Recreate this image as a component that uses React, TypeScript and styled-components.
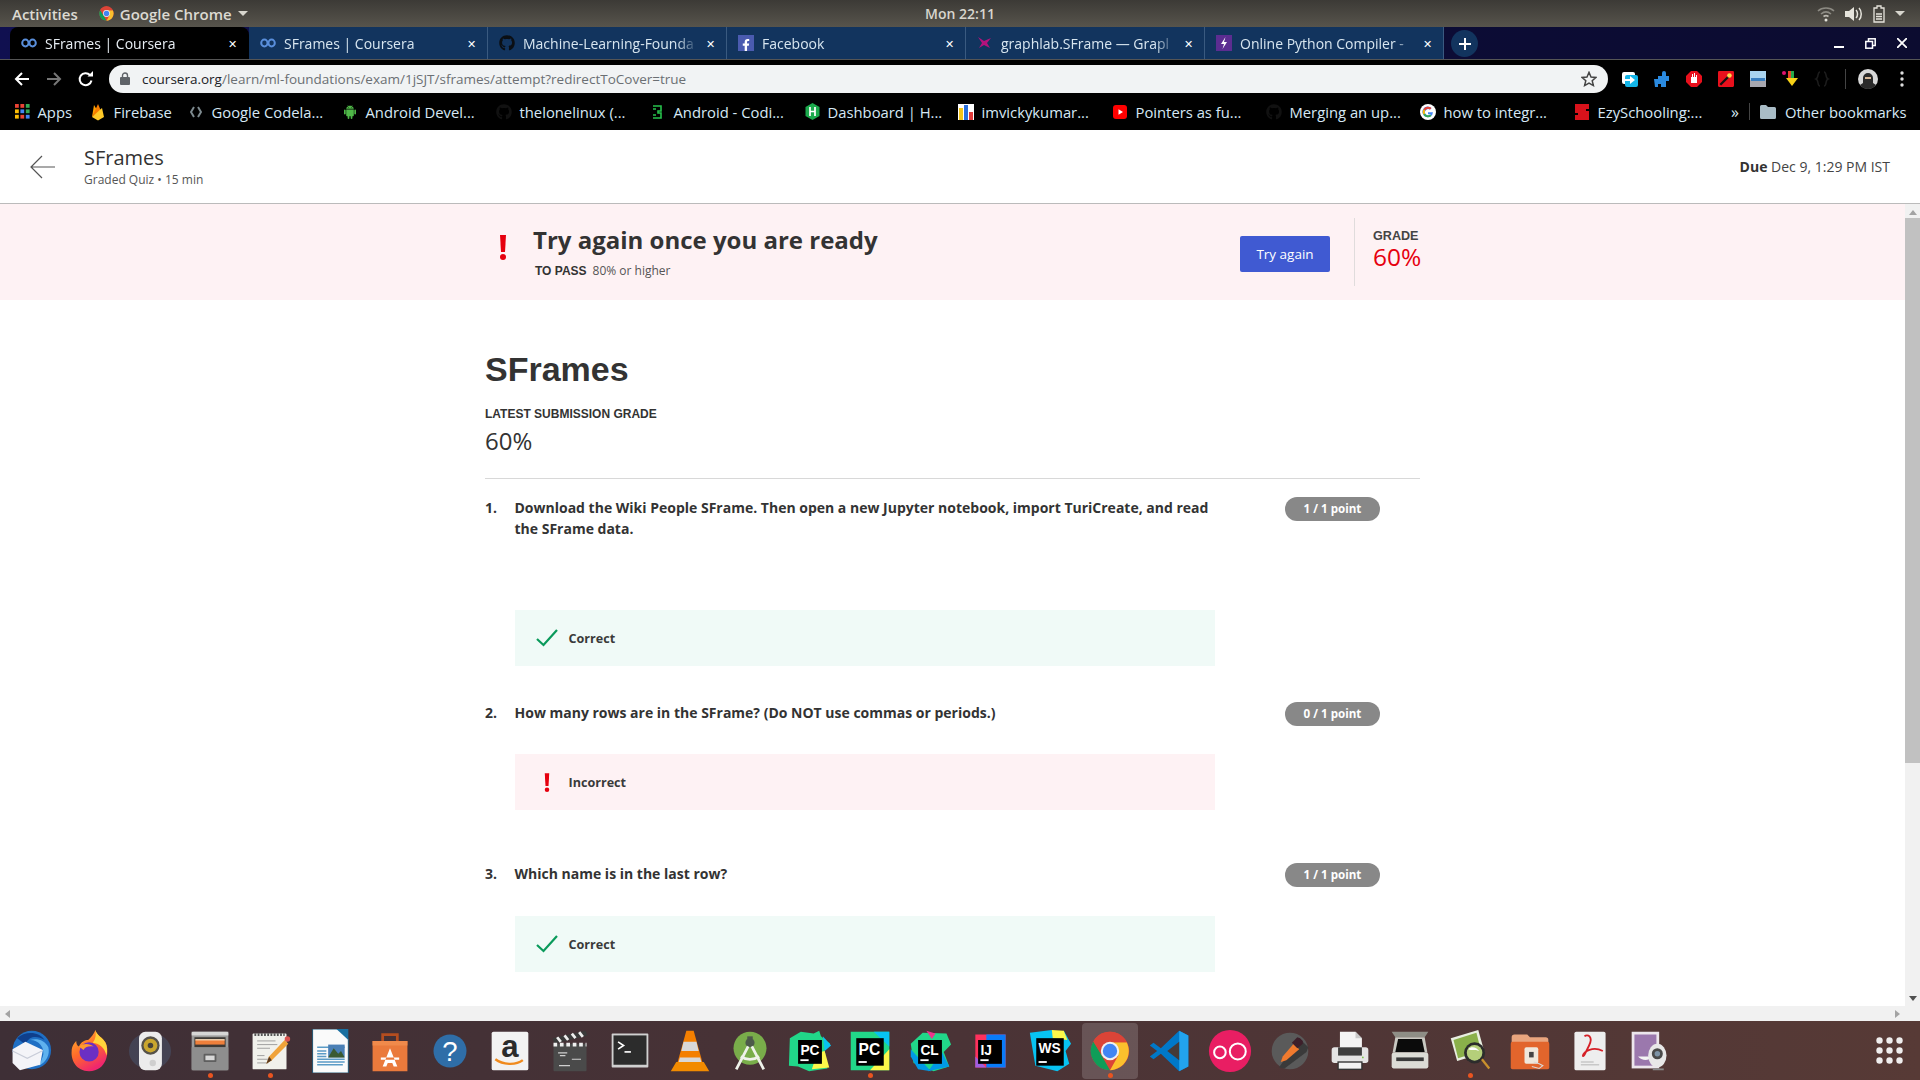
import React from 'react';
import styled, { createGlobalStyle } from 'styled-components';
import { FaGithub, FaFacebookF } from 'react-icons/fa';
import { AiFillAndroid } from 'react-icons/ai';

const GlobalStyle = createGlobalStyle`
    html, body { margin: 0; padding: 0; background: #000; overflow: hidden; }
    * { box-sizing: border-box; }
    body { font-family: "Open Sans", "Noto Sans", sans-serif; color: #333; }
`;

const ChromeLogo = ({ size }: { size: number }) => (
    <svg width={size} height={size} viewBox="0 0 48 48">
        <circle cx="24" cy="24" r="23" fill="#db4437" />
        <path d="M24 47A23 23 0 0 1 4 12.5L14 29.5 24 47z" fill="#0f9d58" />
        <path d="M24 47L34 29.5 24 13.5H44A23 23 0 0 1 24 47z" fill="#fbc02d" />
        <path d="M4 12.5L14.5 29 24 13.5H44L42 10A23 23 0 0 0 6 9z" fill="#db4437" />
        <circle cx="24" cy="24" r="11" fill="#f1f1f1" />
        <circle cx="24" cy="24" r="8.6" fill="#4285f4" />
    </svg>
);

const BangIcon = ({ w, h }: { w: number; h: number }) => (
    <svg width={w} height={h} viewBox="0 0 8 25" fill="#e6000e">
        <path d="M1 0h6l-1 17H2z" />
        <circle cx="4" cy="22" r="3" />
    </svg>
);

const Infinity8 = () => (
    <svg width="16" height="10" viewBox="0 0 16 10" fill="none" stroke="#5a8fdc" strokeWidth="2">
        <ellipse cx="4.4" cy="5" rx="3.2" ry="3.4" />
        <ellipse cx="11.6" cy="5" rx="3.2" ry="3.4" />
    </svg>
);

const GraphlabIcon = () => (
    <svg width="16" height="14" viewBox="0 0 16 14">
        <path d="M1 1l6 4 7-3-4 5 3 5-6-3-5 3 3-5z" fill="#b5127c" />
    </svg>
);

const BoltIcon = () => (
    <svg width="16" height="16" viewBox="0 0 16 16">
        <rect width="16" height="16" fill="#5c2d91" />
        <path d="M9.5 2L5 9h3l-1.5 5L11 7H8z" fill="#fff" />
    </svg>
);

const FacebookIcon = () => (
    <FbBox>
        <FaFacebookF size={12} />
    </FbBox>
);

const FbBox = styled.span`
    width: 16px;
    height: 16px;
    background: #4a5bb0;
    color: #fff;
    display: flex;
    align-items: flex-end;
    justify-content: center;
`;

const AppsIcon = () => (
    <svg width="15" height="15" viewBox="0 0 15 15">
        {['#ea4335', '#ea4335', '#34a853', '#fbbc05', '#4285f4', '#34a853', '#fbbc05', '#ea4335', '#4285f4'].map((c, i) => (
            <rect key={i} x={(i % 3) * 5.4} y={Math.floor(i / 3) * 5.4} width="3.8" height="3.8" fill={c} />
        ))}
    </svg>
);

const FirebaseIcon = () => (
    <svg width="14" height="18" viewBox="0 0 14 18">
        <path d="M1 14L3 2l3 5z" fill="#ffa000" />
        <path d="M1 14L7 1l3 7z" fill="#f57c00" />
        <path d="M1 14L11 5l2 9-6 3.5z" fill="#ffca28" />
    </svg>
);

const CodelabIcon = () => (
    <svg width="12" height="14" viewBox="0 0 12 14" fill="none" stroke="#7d8a8f" strokeWidth="2">
        <path d="M4 2L1 7l3 5M8 2l3 5-3 5" />
    </svg>
);

const AndroidCodi = () => (
    <svg width="12" height="16" viewBox="0 0 12 16" fill="none" stroke="#27c24c" strokeWidth="1.6">
        <path d="M1 2h8v5H6v2h3v5H1M4 5H1M4 11H1" />
    </svg>
);

const HackerIcon = () => (
    <svg width="15" height="17" viewBox="0 0 15 17">
        <path d="M7.5 0l7 4v9l-7 4-7-4V4z" fill="#1ba94c" />
        <path d="M5 4v9M10 4v9M5 8.5h5" stroke="#fff" strokeWidth="1.7" />
    </svg>
);

const BarsIcon = () => (
    <svg width="16" height="16" viewBox="0 0 16 16">
        <rect width="16" height="16" fill="#fff" />
        <rect x="1" y="4" width="4" height="12" fill="#f5c518" />
        <rect x="6" y="1" width="4" height="15" fill="#2a6fdb" />
        <rect x="11" y="8" width="4" height="8" fill="#e23b3b" />
    </svg>
);

const YoutubeIcon = () => (
    <svg width="14" height="14" viewBox="0 0 14 14">
        <rect width="14" height="14" rx="3" fill="#f00" />
        <path d="M5.500 4.200v5.600L10 7z" fill="#fff" />
    </svg>
);

const GoogleIcon = () => (
    <svg width="16" height="16" viewBox="0 0 16 16">
        <circle cx="8" cy="8" r="8" fill="#fff" />
        <path d="M13 8.2H8v2h2.8A3.2 3.2 0 1 1 10 5.6l1.500-1.500A5.300 5.300 0 1 0 13 8.200z" fill="#4285f4" />
        <path d="M3.400 5.300A5.300 5.300 0 0 1 11.500 4.100L10 5.600a3.200 3.200 0 0 0-4.900.900z" fill="#ea4335" />
        <path d="M3.400 5.300a5.300 5.300 0 0 0 0 5.400l1.700-1.300a3.200 3.200 0 0 1 0-2.900z" fill="#fbbc05" />
        <path d="M3.400 10.700a5.300 5.300 0 0 0 8.100 1.200L10 10.500a3.200 3.200 0 0 1-4.900-1.100z" fill="#34a853" />
    </svg>
);

const EzyIcon = () => (
    <svg width="16" height="16" viewBox="0 0 16 16">
        <path d="M1 0h14v5h-3v2h3v9H1v-5h3V9H1z" fill="#d8121b" />
    </svg>
);

const FolderSmall = () => (
    <svg width="16" height="14" viewBox="0 0 16 14">
        <path d="M0 1.500A1.500 1.500 0 0 1 1.500 0H6l2 2h6.500A1.500 1.500 0 0 1 16 3.500v9a1.500 1.500 0 0 1-1.500 1.500h-13A1.500 1.500 0 0 1 0 12.500z" fill="#a9bcc6" />
    </svg>
);

/* dock icons, all drawn in a 48 box */
const Thunderbird = () => (
    <svg viewBox="0 0 48 48">
        <circle cx="26" cy="23" r="21" fill="#1f6fc4" />
        <path d="M10 10c8-8 24-8 30 2-6-4-12-4-16-2l-6 6z" fill="#0f3f8c" />
        <path d="M24 12a14 14 0 0 1 14 18l-4 10c8-4 12-12 10-20-4-8-12-10-20-8z" fill="#5fb2ee" />
        <path d="M5 22l14-8 19 9-3 16-22 6-8-8z" fill="#f4f4f8" />
        <path d="M5 24l16 8 16-8" fill="none" stroke="#c8ccd8" strokeWidth="1.2" />
    </svg>
);

const Firefox = () => (
    <svg viewBox="0 0 48 48">
        <defs>
            <linearGradient id="ff" x1="0" y1="0" x2="0.5" y2="1">
                <stop offset="0" stopColor="#ffbd2e" />
                <stop offset="0.55" stopColor="#ff6a2a" />
                <stop offset="1" stopColor="#f0266f" />
            </linearGradient>
        </defs>
        <path d="M30 1c1 6 8 8 11 14 5 10 1 31-18 31C9 46 3 34 4 24c0-5 3-9 5-11 0 3 1 5 3 6 2-5 7-7 10-7 3-3 6-6 8-11z" fill="url(#ff)" />
        <path d="M30 1c1 6 8 8 11 14 2 4 2 9 1 14-2-8-7-13-15-14 3-4 4-9 3-14z" fill="#ffd43b" />
        <circle cx="23" cy="25" r="10.500" fill="#6b2fc4" />
        <path d="M12 19c5-4 12-3 16 0-6-1-10 1-11 4-2-2-4-3-5-4z" fill="#ff9a2e" />
    </svg>
);

const Speaker = () => (
    <svg viewBox="0 0 48 48">
        <ellipse cx="24" cy="24" rx="23" ry="20" fill="#4a5a78" opacity="0.45" />
        <rect x="12" y="3" width="25" height="42" rx="7" fill="#ececec" />
        <circle cx="24.500" cy="18" r="10" fill="#55524a" />
        <circle cx="24.500" cy="18" r="7.500" fill="#c9a62e" />
        <circle cx="24.500" cy="18" r="3" fill="#47433a" />
        <circle cx="27" cy="37" r="3.500" fill="#cfcfcf" />
    </svg>
);

const Cabinet = () => (
    <svg viewBox="0 0 48 48">
        <rect x="4" y="3" width="40" height="42" rx="2" fill="#9b9b9b" />
        <rect x="4" y="3" width="40" height="4" fill="#d6d6d6" />
        <rect x="7" y="9" width="34" height="11" fill="#3d3935" />
        <rect x="8" y="12" width="32" height="5" fill="#ee7f3b" />
        <rect x="8" y="11" width="32" height="1.500" fill="#f6d7b5" />
        <rect x="4" y="20" width="40" height="25" fill="#8e8e8e" />
        <rect x="17" y="27" width="14" height="9" rx="1" fill="#5f5f5f" />
        <rect x="19" y="29" width="10" height="5" fill="#d8d8d8" />
    </svg>
);

const Notepad = () => (
    <svg viewBox="0 0 48 48">
        <rect x="5" y="5" width="37" height="39" rx="1" fill="#f1f1ec" />
        <path d="M7 6h33" stroke="#555" strokeWidth="3" strokeDasharray="2 1.500" />
        <path d="M10 13h20M10 17h22M10 21h14M10 29h8M10 33h14M10 37h12" stroke="#9a9a9a" strokeWidth="1" />
        <path d="M20 38l3-8L40 12l4 4-18 18z" fill="#f0a33a" />
        <path d="M20 38l3-8 3 4z" fill="#5a3a20" />
        <circle cx="43" cy="11" r="3" fill="#d9534f" />
    </svg>
);

const WriterDoc = () => (
    <svg viewBox="0 0 48 48">
        <path d="M5 0h28l11 11v37H5z" fill="#fafafa" stroke="#17506f" strokeWidth="1" />
        <path d="M31 0h13v12z" fill="#1a6fa0" />
        <path d="M10 20h30M10 36h30M10 39h28M10 33h30" stroke="#5b9bc6" strokeWidth="1.600" />
        <path d="M10 24h10M10 27h10M10 30h10" stroke="#5b9bc6" strokeWidth="1.600" />
        <rect x="22" y="17" width="18" height="14" fill="#4a7fb5" />
        <path d="M22 31l6-10 5 6 3-3 4 7z" fill="#3a5a30" />
    </svg>
);

const ShopBag = () => (
    <svg viewBox="0 0 48 48">
        <path d="M16 14V6h16v8" fill="none" stroke="#b54d1f" strokeWidth="3" />
        <path d="M5 13h38v33H5z" fill="#ea7a3c" />
        <path d="M5 13h38v5H5z" fill="#f08a4b" />
        <path d="M24 21l-8 20h4l1.500-4h5l1.500 4h4zM14 31h20v2.500H14z" fill="#fff" />
    </svg>
);

const HelpIcon = () => (
    <svg viewBox="0 0 48 48">
        <circle cx="24" cy="24" r="18" fill="#2f6ea8" />
        <text x="24" y="35" textAnchor="middle" fontFamily="Liberation Sans" fontSize="30" fill="#fff">?</text>
    </svg>
);

const AmazonIcon = () => (
    <svg viewBox="0 0 48 48">
        <rect x="4" y="3" width="40" height="42" rx="2" fill="#f2f2f2" />
        <text x="24" y="31" textAnchor="middle" fontFamily="Liberation Sans" fontWeight="700" fontSize="34" fill="#2b2b2b">a</text>
        <path d="M8 33c8 6 22 7 30 1" fill="none" stroke="#f08a1d" strokeWidth="2.600" />
    </svg>
);

const Clapboard = () => (
    <svg viewBox="0 0 48 48">
        <path d="M5 10L41 2l2 5L7 16z" fill="#3a3a3a" />
        <path d="M10 9l4 5M18 7l4 5M26 5l4 5M34 3.500l4 5" stroke="#eee" strokeWidth="3" />
        <rect x="6" y="16" width="36" height="30" rx="1" fill="#4a4a4a" />
        <path d="M6 17h36" stroke="#eee" strokeWidth="4" strokeDasharray="4 3" />
        <path d="M11 26h10M13 29h6M12 40h12M26 33h10" stroke="#cfcfcf" strokeWidth="1.300" />
    </svg>
);

const TerminalIcon = () => (
    <svg viewBox="0 0 48 48">
        <rect x="4" y="5" width="40" height="37" rx="1" fill="#d0d0d0" />
        <rect x="6" y="7" width="36" height="32" fill="#2c2c2c" />
        <path d="M11 14l6 4-6 4" fill="none" stroke="#fff" strokeWidth="1.800" />
        <path d="M18 25h7" stroke="#fff" strokeWidth="1.800" />
    </svg>
);

const VlcIcon = () => (
    <svg viewBox="0 0 48 48">
        <path d="M20 2h8l10 36H10z" fill="#f47f00" />
        <path d="M17 14h14l2.500 10h-19z" fill="#d8d8d8" />
        <path d="M13 31h22l2 7H11z" fill="#d8d8d8" />
        <path d="M9 36h30l6 10H3z" fill="#f28b00" />
    </svg>
);

const StudioIcon = () => (
    <svg viewBox="0 0 48 48">
        <circle cx="24" cy="21" r="18" fill="#79ad4a" />
        <circle cx="24" cy="15" r="5" fill="#4c5a4a" />
        <path d="M21 8h6v3h-6z" fill="#4c5a4a" />
        <path d="M22 19L9 44M26 19l13 25M14 30c6 4 14 4 20 0" fill="none" stroke="#eef2ea" strokeWidth="3" />
    </svg>
);

const Jetbrains = ({ label, children, box = 26, size = 15 }: { label: string; children: React.ReactNode; box?: number; size?: number }) => {
    const start = 24 - box / 2;
    return (
        <svg viewBox="0 0 48 48">
            {children}
            <rect x={start} y={start + 1} width={box} height={box} fill="#000" />
            <text x={start + 2.5} y={start + size + 2} fontFamily="Liberation Sans" fontWeight="700" fontSize={size} fill="#fff">{label}</text>
            <rect x={start + 2.5} y={start + box - 4} width="9" height="2" fill="#fff" />
        </svg>
    );
};

const PyCharmA = () => (
    <Jetbrains label="PC">
        <path d="M2 10L14 3l14 2 6-3 2 6 10 8-6 7 3 20-20 3-12-5-10-1z" fill="#21d789" />
        <path d="M26 44l19-2-5-18-8 2z" fill="#fcf84a" />
        <path d="M38 8l9 10-7 6z" fill="#07c3f2" />
    </Jetbrains>
);

const PyCharmB = () => (
    <Jetbrains label="PC" box={30} size={17}>
        <rect x="3" y="3" width="42" height="42" fill="#21d789" />
        <path d="M24 45h21V22z" fill="#fcf84a" />
        <path d="M28 3h17v16z" fill="#07c3f2" />
    </Jetbrains>
);

const CLion = () => (
    <Jetbrains label="CL">
        <path d="M3 16L16 4l26 1 5 12-8 8 6 16-17 5L6 37z" fill="#21d789" />
        <path d="M22 46l23-5-8-16z" fill="#009ae5" />
        <path d="M3 30l8 14 14 2-22-24z" fill="#009ae5" />
        <path d="M20 2l10 3-4 6z" fill="#ed358c" />
    </Jetbrains>
);

const IntelliJ = () => (
    <Jetbrains label="IJ">
        <rect x="8" y="6" width="33" height="36" fill="#fe315d" />
        <path d="M20 6h21v36H20z" fill="#087cfa" />
        <path d="M8 30l12 12H8z" fill="#9d5fe0" />
    </Jetbrains>
);

const WebStorm = () => (
    <Jetbrains label="WS" box={30}>
        <path d="M2 4l24-3 3 6 10-5 8 14-6 8 4 14-13 8-24-6z" fill="#07c3f2" />
        <path d="M26 1l13 1 4 10-16-2z" fill="#fcf84a" />
    </Jetbrains>
);

const VsCode = () => (
    <svg viewBox="0 0 48 48">
        <path d="M34 2l10 5v34l-10 5L14 27l-8 6-4-3 8-6-8-6 4-3 8 6z" fill="#0078c8" />
        <path d="M34 2l10 5v34l-10 5z" fill="#22a3ee" />
        <path d="M34 14L21 24l13 10z" fill="#453a38" />
    </svg>
);

const OoIcon = () => (
    <svg viewBox="0 0 48 48">
        <circle cx="24" cy="24" r="23" fill="#e91e63" />
        <circle cx="13" cy="25.500" r="6.300" fill="none" stroke="#fff" strokeWidth="2.200" />
        <circle cx="32.500" cy="24.500" r="8.700" fill="none" stroke="#fff" strokeWidth="2.200" />
    </svg>
);

const Dropper = () => (
    <svg viewBox="0 0 48 48">
        <circle cx="24" cy="24" r="20" fill="#5a5a5a" />
        <path d="M34 10L12 42l6 1 24-18 2-5z" fill="#3a3a3a" />
        <path d="M14 36l2-6 12-14 6 6-14 12z" fill="#f07a2e" />
        <path d="M26 15l6-6 3 1 3 3v3l-6 5z" fill="#3d1f2a" />
    </svg>
);

const Printer = () => (
    <svg viewBox="0 0 48 48">
        <path d="M13 3h17l7 7v14H13z" fill="#f4f4f4" />
        <path d="M30 3l7 7h-7z" fill="#c9c9c9" />
        <rect x="4" y="20" width="40" height="17" rx="3" fill="#e4e4e4" />
        <rect x="11" y="20" width="26" height="9" fill="#3e3e3e" />
        <rect x="11" y="36" width="26" height="8" fill="#f2f2f2" stroke="#333" strokeWidth="1.500" />
        <circle cx="38" cy="31" r="1" fill="#7ec850" />
    </svg>
);

const Scanner = () => (
    <svg viewBox="0 0 48 48">
        <path d="M4 3h40l-4 6H8z" fill="#8e8e86" />
        <path d="M8 9h32l3 17H5z" fill="#c9c9c2" />
        <path d="M11 11h26l3 14H8z" fill="#0b0b0b" />
        <rect x="4" y="26" width="40" height="17" rx="2" fill="#dcdcd6" />
        <rect x="9" y="31" width="30" height="4" fill="#3a3a3a" />
    </svg>
);

const ImageViewer = () => (
    <svg viewBox="0 0 48 48">
        <path d="M3 10L33 1l7 25-30 9z" fill="#e8eee0" />
        <path d="M6 12l25-8 5 20-25 8z" fill="#8ab04a" />
        <circle cx="29" cy="26" r="11.500" fill="#2c2c2c" />
        <circle cx="29" cy="26" r="8.500" fill="#b5cf7a" />
        <path d="M22 22c4-4 9-2 12 2-5-2-8 0-12-2z" fill="#fff" />
        <path d="M37 33l8 10" stroke="#c9902c" strokeWidth="2.500" />
    </svg>
);

const OrangeFolder = () => (
    <svg viewBox="0 0 48 48">
        <path d="M4 9a3 3 0 0 1 3-3h14l3 3h17a3 3 0 0 1 3 3v4H4z" fill="#e9a57e" />
        <rect x="3" y="14" width="42" height="30" rx="2" fill="#e2652c" />
        <rect x="18" y="20" width="15" height="18" rx="2" fill="#efe8dc" />
        <rect x="23" y="25" width="5" height="6" fill="#444" />
        <path d="M28 36l6 2 4 2-4 3-8-2" fill="none" stroke="#d9d9d9" strokeWidth="1.200" />
    </svg>
);

const PdfIcon = () => (
    <svg viewBox="0 0 48 48">
        <rect x="7" y="3" width="34" height="42" rx="2" fill="#eeeeee" />
        <path d="M18 8c3-3 10 0 5 10l-5 10c-2 3-3 1 0-2 5-4 12-6 20-2" fill="none" stroke="#d52027" strokeWidth="2" />
        <path d="M14 36h14M14 39h20" stroke="#c8c8c8" strokeWidth="1.500" />
    </svg>
);

const Webcam = () => (
    <svg viewBox="0 0 48 48">
        <rect x="4" y="3" width="30" height="40" fill="#ece6ec" />
        <rect x="7" y="6" width="24" height="34" fill="#9b78ad" />
        <path d="M11 30c4 5 12 5 16 0z" fill="#f4f4f4" />
        <ellipse cx="32" cy="29" rx="10" ry="13" fill="#e8e8e8" />
        <circle cx="32" cy="27" r="6" fill="#4a4a4a" />
        <circle cx="32" cy="27" r="3" fill="#7d93a6" />
        <rect x="27" y="43" width="12" height="2" fill="#888" />
    </svg>
);

const DockDots = () => (
    <svg viewBox="0 0 28 28" width="28" height="28" fill="#f0eeee">
        {[0, 1, 2, 3, 4, 5, 6, 7, 8].map(i => (
            <circle key={i} cx={3.5 + (i % 3) * 10} cy={3.5 + Math.floor(i / 3) * 10} r="3.200" />
        ))}
    </svg>
);

const tabs = [
    { title: 'SFrames | Coursera', icon: <Infinity8 /> },
    { title: 'SFrames | Coursera', icon: <Infinity8 /> },
    { title: 'Machine-Learning-Founda', icon: <FaGithub size={16} color="#0b0f14" /> },
    { title: 'Facebook', icon: <FacebookIcon /> },
    { title: 'graphlab.SFrame — Grapl', icon: <GraphlabIcon /> },
    { title: 'Online Python Compiler -', icon: <BoltIcon /> },
];

const bookmarks = [
    { label: 'Apps', icon: <AppsIcon />, width: 76 },
    { label: 'Firebase', icon: <FirebaseIcon />, width: 98 },
    { label: 'Google Codela...', icon: <CodelabIcon />, width: 154 },
    { label: 'Android Devel...', icon: <AiFillAndroid size={18} color="#4fb848" />, width: 154 },
    { label: 'thelonelinux (...', icon: <FaGithub size={16} color="#111" />, width: 154 },
    { label: 'Android - Codi...', icon: <AndroidCodi />, width: 154 },
    { label: 'Dashboard | H...', icon: <HackerIcon />, width: 154 },
    { label: 'imvickykumar...', icon: <BarsIcon />, width: 154 },
    { label: 'Pointers as fu...', icon: <YoutubeIcon />, width: 154 },
    { label: 'Merging an up...', icon: <FaGithub size={16} color="#111" />, width: 154 },
    { label: 'how to integr...', icon: <GoogleIcon />, width: 154 },
    { label: 'EzySchooling:...', icon: <EzyIcon />, width: 148 },
];

const dockApps = [
    { icon: <Thunderbird /> },
    { icon: <Firefox /> },
    { icon: <Speaker /> },
    { icon: <Cabinet />, running: true },
    { icon: <Notepad />, running: true },
    { icon: <WriterDoc /> },
    { icon: <ShopBag /> },
    { icon: <HelpIcon /> },
    { icon: <AmazonIcon /> },
    { icon: <Clapboard /> },
    { icon: <TerminalIcon /> },
    { icon: <VlcIcon /> },
    { icon: <StudioIcon /> },
    { icon: <PyCharmA /> },
    { icon: <PyCharmB />, running: true },
    { icon: <CLion /> },
    { icon: <IntelliJ /> },
    { icon: <WebStorm /> },
    { icon: <ChromeLogo size={40} />, running: true, active: true },
    { icon: <VsCode /> },
    { icon: <OoIcon /> },
    { icon: <Dropper /> },
    { icon: <Printer /> },
    { icon: <Scanner /> },
    { icon: <ImageViewer />, running: true },
    { icon: <OrangeFolder /> },
    { icon: <PdfIcon /> },
    { icon: <Webcam /> },
];

const Feedback = ({ ok }: { ok: boolean }) => (
    <FeedbackBox $ok={ok}>
        <FeedbackIcon>
            {ok ? (
                <svg width="22" height="18" viewBox="0 0 22 18" fill="none" stroke="#0a9a5b" strokeWidth="2.200">
                    <path d="M1 10l6.500 6L21 1" />
                </svg>
            ) : (
                <BangIcon w={6} h={19} />
            )}
        </FeedbackIcon>
        {ok ? 'Correct' : 'Incorrect'}
    </FeedbackBox>
);

export default function App() {
    return (
        <>
            <GlobalStyle />
            <Screen>
                <TopBar>
                    <TopLeft>
                        <span>Activities</span>
                        <AppMenu>
                            <ChromeLogo size={15} />
                            Google Chrome
                            <Caret />
                        </AppMenu>
                    </TopLeft>
                    <Clock>Mon 22:11</Clock>
                    <TopRight>
                        <svg width="18" height="16" viewBox="0 0 18 16" fill="none" stroke="#bdbab2" strokeWidth="1.600">
                            <path d="M1 5c4-4 12-4 16 0M4 8c3-2.500 7-2.500 10 0" opacity="0.6" />
                            <path d="M6.500 10.500c1.500-1 3.500-1 5 0" />
                            <circle cx="9" cy="14" r="1.500" fill="#e6e4dc" stroke="none" />
                        </svg>
                        <svg width="18" height="16" viewBox="0 0 18 16">
                            <path d="M0 5h4l5-4v14l-5-4H0z" fill="#e6e4dc" />
                            <path d="M11 4c2 2 2 6 0 8M14 2c3 3 3 9 0 12" fill="none" stroke="#e6e4dc" strokeWidth="1.500" />
                        </svg>
                        <svg width="12" height="18" viewBox="0 0 12 18" fill="none" stroke="#e6e4dc" strokeWidth="1.300">
                            <path d="M4 1h4v2h3v14H1V3h3z" />
                            <path d="M3 9h6M3 11.500h6M3 14h6" />
                        </svg>
                        <Caret />
                    </TopRight>
                </TopBar>

                <TabStrip>
                    {tabs.map((t, i) => (
                        <Tab key={i} $active={i === 0}>
                            <TabIcon>{t.icon}</TabIcon>
                            <TabTitle>{t.title}</TabTitle>
                            <TabClose>✕</TabClose>
                        </Tab>
                    ))}
                    <NewTab>
                        <svg width="12" height="12" viewBox="0 0 12 12" stroke="#fff" strokeWidth="2">
                            <path d="M6 0v12M0 6h12" />
                        </svg>
                    </NewTab>
                    <WindowButtons>
                        <svg width="10" height="10" viewBox="0 0 10 10"><rect y="8" width="10" height="2" fill="#fff" /></svg>
                        <svg width="11" height="11" viewBox="0 0 11 11" fill="none" stroke="#fff" strokeWidth="1.500">
                            <rect x="3.500" y="0.800" width="6.700" height="6.700" />
                            <rect x="0.800" y="3.500" width="6.700" height="6.700" fill="#0c0c3a" />
                        </svg>
                        <svg width="10" height="10" viewBox="0 0 10 10" stroke="#fff" strokeWidth="1.800"><path d="M0 0l10 10M10 0L0 10" /></svg>
                    </WindowButtons>
                </TabStrip>

                <Toolbar>
                    <NavButtons>
                        <svg width="16" height="16" viewBox="0 0 16 16" fill="none" stroke="#fff" strokeWidth="2"><path d="M15 8H2M8 2L2 8l6 6" /></svg>
                        <svg width="16" height="16" viewBox="0 0 16 16" fill="none" stroke="#777" strokeWidth="2"><path d="M1 8h13M8 2l6 6-6 6" /></svg>
                        <svg width="16" height="16" viewBox="0 0 16 16" fill="none" stroke="#fff" strokeWidth="2">
                            <path d="M13.500 9.500A6 6 0 1 1 12 4" />
                            <path d="M9.500 5.500H15V0" fill="#fff" stroke="none" />
                        </svg>
                    </NavButtons>
                    <UrlPill>
                        <svg width="10" height="13" viewBox="0 0 10 13">
                            <rect y="5" width="10" height="8" rx="1" fill="#5f6368" />
                            <path d="M2.500 5V3.500a2.500 2.500 0 0 1 5 0V5" fill="none" stroke="#5f6368" strokeWidth="1.400" />
                        </svg>
                        <UrlText>
                            <b>coursera.org</b>/learn/ml-foundations/exam/1jSJT/sframes/attempt?redirectToCover=true
                        </UrlText>
                        <svg width="16" height="16" viewBox="0 0 24 24" fill="none" stroke="#444" strokeWidth="2.200">
                            <path d="M12 2l3 7 7.500.6-5.700 4.900 1.800 7.300L12 18l-6.600 3.800 1.800-7.300L1.500 9.600 9 9z" />
                        </svg>
                    </UrlPill>
                    <Extensions>
                        <svg width="16" height="16" viewBox="0 0 16 16">
                            <rect y="1" width="13" height="12" rx="2" fill="#fff" />
                            <rect x="3" y="4" width="13" height="12" rx="2" fill="#13b5e8" />
                            <path d="M3 8h5V5l5 4-5 4v-3H3z" fill="#fff" />
                        </svg>
                        <svg width="16" height="16" viewBox="0 0 16 16">
                            <path d="M0 8h4V5h4V2a2 2 0 0 1 4 0v3h3v5h-3v6H7v-3H4v3H1z" fill="#2a8ae0" />
                        </svg>
                        <svg width="16" height="16" viewBox="0 0 16 16">
                            <path d="M5 0h6l5 5v6l-5 5H5l-5-5V5z" fill="#e8101c" />
                            <path d="M5 12V6h1V3h1v3h1V2h1v4h1V4h1v8z" fill="#fff" />
                        </svg>
                        <svg width="16" height="16" viewBox="0 0 14 14">
                            <rect width="14" height="14" rx="1" fill="#e8101c" />
                            <path d="M2 12l7-7" stroke="#111" strokeWidth="2" />
                            <circle cx="10" cy="4" r="2" fill="#ffd84a" />
                        </svg>
                        <svg width="16" height="16" viewBox="0 0 16 16">
                            <rect width="16" height="9" fill="#a9d4ef" />
                            <rect y="9" width="16" height="7" fill="#a8a8b0" />
                            <rect x="1" y="7" width="14" height="3" fill="#3a7fc0" />
                        </svg>
                        <svg width="16" height="16" viewBox="0 0 16 16">
                            <circle cx="2" cy="2" r="2" fill="#e0116f" />
                            <rect x="6" y="0" width="3" height="7" fill="#e8442a" />
                            <rect x="9" y="0" width="3" height="7" fill="#27a84a" />
                            <path d="M4 7h12l-6 8z" fill="#f7d117" />
                        </svg>
                        <svg width="16" height="16" viewBox="0 0 16 16" fill="none" stroke="#1c1c1c" strokeWidth="1.500">
                            <path d="M6 1C3 1 5 7 2 8c3 1 1 7 4 7M10 1c3 0 1 6 4 7-3 1-1 7-4 7" />
                        </svg>
                        <ToolbarSep />
                        <svg width="20" height="20" viewBox="0 0 20 20">
                            <circle cx="10" cy="10" r="10" fill="#d8d8d8" />
                            <path d="M5 9a5 5 0 0 1 10 0v5l3 2a10 10 0 0 1-16 0l3-2z" fill="#2a2a2a" />
                            <rect x="7" y="8" width="6" height="2" fill="#d8b898" />
                        </svg>
                        <KebabIcon width="4" height="16" viewBox="0 0 4 16" fill="#ddd">
                            <circle cx="2" cy="2" r="1.700" />
                            <circle cx="2" cy="8" r="1.700" />
                            <circle cx="2" cy="14" r="1.700" />
                        </KebabIcon>
                    </Extensions>
                </Toolbar>

                <BookmarksBar>
                    {bookmarks.map((b, i) => (
                        <Bookmark key={i} $w={b.width}>
                            <BookmarkIcon>{b.icon}</BookmarkIcon>
                            {b.label}
                        </Bookmark>
                    ))}
                    <MoreMarks>»</MoreMarks>
                    <MarksSep />
                    <OtherMarks>
                        <FolderSmall />
                        Other bookmarks
                    </OtherMarks>
                </BookmarksBar>

                <PageHeader>
                    <svg width="26" height="24" viewBox="0 0 26 24" fill="none" stroke="#555" strokeWidth="1.200">
                        <path d="M25 12H1M12 1L1 12l11 11" />
                    </svg>
                    <HeaderTitles>
                        <HeaderTitle>SFrames</HeaderTitle>
                        <HeaderSub>Graded Quiz • 15 min</HeaderSub>
                    </HeaderTitles>
                    <DueDate><b>Due</b> Dec 9, 1:29 PM IST</DueDate>
                </PageHeader>

                <Viewport>
                    <Scroller>
                        <Banner>
                            <BannerInner>
                                <BangSlot><BangIcon w={8} h={25} /></BangSlot>
                                <BannerText>
                                    <BannerHeading>Try again once you are ready</BannerHeading>
                                    <ToPass><b>TO PASS</b>80% or higher</ToPass>
                                </BannerText>
                                <TryButton>Try again</TryButton>
                                <GradeBox>
                                    <GradeLabel>GRADE</GradeLabel>
                                    <GradeValue>60%</GradeValue>
                                </GradeBox>
                            </BannerInner>
                        </Banner>
                        <Content>
                            <QuizTitle>SFrames</QuizTitle>
                            <SubmissionLabel>LATEST SUBMISSION GRADE</SubmissionLabel>
                            <SubmissionValue>60%</SubmissionValue>
                            <Rule />

                            <Question $top={18}>
                                <QNumber>1.</QNumber>
                                <QText>Download the Wiki People SFrame. Then open a new Jupyter notebook, import TuriCreate, and read the SFrame data.</QText>
                                <PointBadge>1 / 1 point</PointBadge>
                            </Question>
                            <FeedbackRow $top={71}><Feedback ok /></FeedbackRow>

                            <Question $top={36}>
                                <QNumber>2.</QNumber>
                                <QText>How many rows are in the SFrame? (Do NOT use commas or periods.)</QText>
                                <PointBadge>0 / 1 point</PointBadge>
                            </Question>
                            <FeedbackRow $top={28}><Feedback ok={false} /></FeedbackRow>

                            <Question $top={53}>
                                <QNumber>3.</QNumber>
                                <QText>Which name is in the last row?</QText>
                                <PointBadge>1 / 1 point</PointBadge>
                            </Question>
                            <FeedbackRow $top={29}><Feedback ok /></FeedbackRow>
                        </Content>
                    </Scroller>
                    <VScroll>
                        <ArrowUp />
                        <VThumb />
                        <ArrowDown />
                    </VScroll>
                </Viewport>
                <HScroll>
                    <ArrowLeft />
                    <ArrowRight />
                </HScroll>

                <Dock>
                    {dockApps.map((a, i) => (
                        <DockCell key={i} $active={a.active}>
                            <DockIcon>{a.icon}</DockIcon>
                            {a.running && <RunDot />}
                        </DockCell>
                    ))}
                    <DockGrid><DockDots /></DockGrid>
                </Dock>
            </Screen>
        </>
    );
}

const Screen = styled.div`
    width: 1920px;
    height: 1080px;
    display: flex;
    flex-direction: column;
    overflow: hidden;
    background: #fff;
`;

const TopBar = styled.div`
    height: 27px;
    flex: none;
    display: grid;
    grid-template-columns: 1fr auto 1fr;
    align-items: center;
    padding: 0 12px;
    background: linear-gradient(#3c3a36, #57544c);
    color: #dcdad2;
    font-size: 14px;
    font-weight: 600;
`;

const TopLeft = styled.div`
    display: flex;
    align-items: center;
    gap: 21px;
    font-size: 15px;
`;

const AppMenu = styled.div`
    display: flex;
    align-items: center;
    gap: 6px;
`;

const Caret = styled.span`
    width: 0;
    height: 0;
    border-left: 5px solid transparent;
    border-right: 5px solid transparent;
    border-top: 5px solid #d8d6ce;
`;

const Clock = styled.div`
    color: #d8d6ce;
`;

const TopRight = styled.div`
    display: flex;
    align-items: center;
    justify-content: flex-end;
    gap: 10px;
    padding-right: 3px;
`;

const TabStrip = styled.div`
    height: 33px;
    flex: none;
    display: flex;
    align-items: flex-end;
    padding-left: 10px;
    background: linear-gradient(90deg, #101050, #0c0c3a 50%, #0c0c30);
    border-bottom: 1px solid #555;
`;

const Tab = styled.div<{ $active?: boolean }>`
    width: 239px;
    height: 32px;
    display: flex;
    align-items: center;
    padding: 0 8px 0 11px;
    color: ${p => (p.$active ? '#e8eef4' : '#d8e6f0')};
    background: ${p => (p.$active ? '#000' : '#12345e')};
    border-radius: ${p => (p.$active ? '8px 8px 0 0' : '0')};
    border-right: 1px solid ${p => (p.$active ? 'transparent' : '#3a5a80')};
    font-size: 14px;
`;

const TabIcon = styled.span`
    width: 16px;
    height: 16px;
    margin-right: 8px;
    flex: none;
    display: flex;
    align-items: center;
    justify-content: center;
`;

const TabTitle = styled.span`
    flex: 1;
    min-width: 0;
    white-space: nowrap;
    -webkit-mask-image: linear-gradient(90deg, #000 88%, transparent);
    mask-image: linear-gradient(90deg, #000 88%, transparent);
`;

const TabClose = styled.span`
    width: 16px;
    margin-left: 4px;
    flex: none;
    font-size: 11px;
    text-align: center;
    color: #fff;
`;

const NewTab = styled.div`
    width: 27px;
    height: 27px;
    margin: 0 0 2px 7px;
    border-radius: 50%;
    background: #12345e;
    display: flex;
    align-items: center;
    justify-content: center;
`;

const WindowButtons = styled.div`
    margin-left: auto;
    height: 32px;
    display: flex;
    align-items: center;
    gap: 21px;
    padding-right: 13px;
`;

const Toolbar = styled.div`
    height: 37px;
    flex: none;
    display: flex;
    align-items: center;
    background: #000;
    padding: 0 14px;
`;

const NavButtons = styled.div`
    width: 95px;
    flex: none;
    display: flex;
    gap: 16px;
`;

const UrlPill = styled.div`
    width: 1499px;
    height: 28px;
    flex: none;
    border-radius: 14px;
    background: #f1f3f4;
    display: flex;
    align-items: center;
    padding: 0 11px 0 11px;
`;

const UrlText = styled.div`
    flex: 1;
    margin-left: 12px;
    font-size: 13.500px;
    color: #6b6f73;
    white-space: nowrap;
    b { font-weight: 400; color: #202124; }
`;

const Extensions = styled.div`
    flex: 1;
    display: flex;
    align-items: center;
    gap: 16px;
    padding-left: 14px;
`;

const ToolbarSep = styled.span`
    width: 1px;
    height: 20px;
    margin: 0 -4px 0 -1px;
    background: #444;
`;

const KebabIcon = styled.svg`
    margin-left: 6px;
`;

const BookmarksBar = styled.div`
    height: 33px;
    flex: none;
    display: flex;
    align-items: center;
    padding: 0 0 4px 14px;
    background: #000;
    color: #d6e8f5;
    font-size: 14.800px;
    white-space: nowrap;
`;

const Bookmark = styled.div<{ $w: number }>`
    width: ${p => p.$w}px;
    flex: none;
    display: flex;
    align-items: center;
`;

const BookmarkIcon = styled.span`
    width: 16px;
    margin-right: 7.500px;
    flex: none;
    display: flex;
    align-items: center;
    justify-content: center;
`;

const MoreMarks = styled.span`
    margin-left: 9px;
    width: 14px;
    font-size: 16px;
`;

const MarksSep = styled.span`
    width: 1px;
    height: 17px;
    margin-left: 4px;
    background: #444;
`;

const OtherMarks = styled.div`
    margin-left: 10px;
    display: flex;
    align-items: center;
    gap: 9px;
`;

const PageHeader = styled.div`
    height: 74px;
    flex: none;
    display: flex;
    align-items: center;
    padding: 0 30px;
    background: #fff;
    border-bottom: 1px solid #bbb;
`;

const HeaderTitles = styled.div`
    margin-left: 28px;
    padding-top: 1px;
`;

const HeaderTitle = styled.div`
    font-size: 20px;
    line-height: 26px;
    color: #333;
`;

const HeaderSub = styled.div`
    font-size: 12px;
    line-height: 18px;
    color: #555;
`;

const DueDate = styled.div`
    margin-left: auto;
    font-size: 14px;
    color: #444;
    b { color: #333; font-weight: 700; }
`;

const Viewport = styled.div`
    height: 802px;
    flex: none;
    display: flex;
`;

const Scroller = styled.div`
    flex: 1;
    overflow: hidden;
`;

const Banner = styled.div`
    height: 96px;
    background: #fef2f4;
`;

const BannerInner = styled.div`
    width: 935px;
    height: 96px;
    margin: 0 auto;
    display: flex;
    align-items: center;
`;

const BangSlot = styled.span`
    width: 48px;
    padding-left: 14px;
    margin-top: -10px;
    display: flex;
`;

const BannerText = styled.div`
    flex: 1;
`;

const BannerHeading = styled.div`
    font-size: 24px;
    line-height: 30px;
    font-weight: 700;
    color: #333;
`;

const ToPass = styled.div`
    margin: 8px 0 0 2px;
    font-size: 12px;
    line-height: 16px;
    color: #555;
    b {
        margin-right: 6px;
        font-family: "Liberation Sans", sans-serif;
        font-weight: 700;
        color: #333;
    }
`;

const TryButton = styled.div`
    width: 90px;
    height: 36px;
    margin-top: 4px;
    border-radius: 2px;
    background: #405ad2;
    color: #fff;
    font-size: 13.500px;
    display: flex;
    align-items: center;
    justify-content: center;
`;

const GradeBox = styled.div`
    width: 66px;
    height: 68px;
    margin-left: 24px;
    padding: 11px 0 0 18px;
    border-left: 1px solid #e0dcdc;
`;

const GradeLabel = styled.div`
    font-family: "Liberation Sans", sans-serif;
    font-size: 12.600px;
    font-weight: 700;
    line-height: 14px;
    color: #444;
`;

const GradeValue = styled.div`
    font-size: 24.500px;
    line-height: 27px;
    color: #e6000e;
`;

const Content = styled.div`
    width: 935px;
    margin: 0 auto;
`;

const QuizTitle = styled.h1`
    margin: 47px 0 0;
    font-family: "Liberation Sans", sans-serif;
    font-size: 34px;
    line-height: 44px;
    font-weight: 700;
    color: #333;
`;

const SubmissionLabel = styled.div`
    margin-top: 15px;
    font-family: "Liberation Sans", sans-serif;
    font-size: 12px;
    line-height: 16px;
    font-weight: 700;
    color: #333;
`;

const SubmissionValue = styled.div`
    margin-top: 3px;
    font-size: 24px;
    line-height: 32px;
    color: #333;
`;

const Rule = styled.div`
    height: 1px;
    margin-top: 21px;
    background: #d8d8d8;
`;

const Question = styled.div<{ $top: number }>`
    margin-top: ${p => p.$top}px;
    display: grid;
    grid-template-columns: 29.500px 700.500px 70px 95px;
    min-height: 24px;
`;

const QNumber = styled.div`
    font-size: 14px;
    line-height: 21px;
    font-weight: 700;
    color: #333;
`;

const QText = styled.div`
    font-size: 14px;
    line-height: 21px;
    font-weight: 700;
    color: #333;
`;

const PointBadge = styled.div`
    grid-column: 4;
    height: 24px;
    padding-bottom: 2px;
    border-radius: 12px;
    background: #888;
    color: #fff;
    font-size: 11.600px;
    font-weight: 700;
    display: flex;
    align-items: center;
    justify-content: center;
`;

const FeedbackRow = styled.div<{ $top: number }>`
    margin: ${p => p.$top}px 0 0 29.500px;
    width: 700.500px;
`;

const FeedbackBox = styled.div<{ $ok: boolean }>`
    height: 56px;
    display: flex;
    align-items: center;
    padding-left: 21px;
    background: ${p => (p.$ok ? '#f0faf7' : '#fef2f4')};
    font-size: 12.600px;
    font-weight: 700;
    color: #3a3a3a;
`;

const FeedbackIcon = styled.span`
    width: 22px;
    margin-right: 11px;
    display: flex;
    justify-content: center;
`;

const VScroll = styled.div`
    width: 15px;
    flex: none;
    display: flex;
    flex-direction: column;
    align-items: center;
    background: #f1f1f1;
`;

const VThumb = styled.div`
    width: 100%;
    height: 545px;
    margin-top: 3px;
    background: #c1c1c1;
`;

const ArrowUp = styled.span`
    margin-top: 6px;
    border-left: 4px solid transparent;
    border-right: 4px solid transparent;
    border-bottom: 5px solid #a3a3a3;
`;

const ArrowDown = styled.span`
    margin-top: auto;
    margin-bottom: 5px;
    border-left: 4px solid transparent;
    border-right: 4px solid transparent;
    border-top: 5px solid #505050;
`;

const HScroll = styled.div`
    height: 15px;
    flex: none;
    display: flex;
    align-items: center;
    justify-content: space-between;
    padding: 0 20px 0 5px;
    background: #f1f1f1;
`;

const ArrowLeft = styled.span`
    border-top: 4px solid transparent;
    border-bottom: 4px solid transparent;
    border-right: 5px solid #a3a3a3;
`;

const ArrowRight = styled.span`
    border-top: 4px solid transparent;
    border-bottom: 4px solid transparent;
    border-left: 5px solid #a3a3a3;
`;

const Dock = styled.div`
    height: 59px;
    flex: none;
    display: flex;
    align-items: center;
    background: linear-gradient(90deg, #3e2f36, #4a3336 50%, #573a36);
`;

const DockCell = styled.div<{ $active?: boolean }>`
    position: relative;
    width: ${p => (p.$active ? '56px' : '60px')};
    height: 56px;
    flex: none;
    margin: 1px ${p => (p.$active ? '2px' : '0')} 0;
    display: flex;
    align-items: center;
    justify-content: center;
    border-radius: 4px;
    background: ${p => (p.$active ? 'rgba(255,255,255,.16)' : 'transparent')};
`;

const DockIcon = styled.div`
    width: 44px;
    height: 44px;
    display: flex;
    align-items: center;
    justify-content: center;
    svg:not([width]) { width: 44px; height: 44px; }
`;

const RunDot = styled.span`
    position: absolute;
    left: 50%;
    bottom: 1px;
    width: 5px;
    height: 5px;
    margin-left: -2.500px;
    border-radius: 50%;
    background: #e95420;
`;

const DockGrid = styled.div`
    margin-left: auto;
    margin-right: 16px;
    display: flex;
`;
